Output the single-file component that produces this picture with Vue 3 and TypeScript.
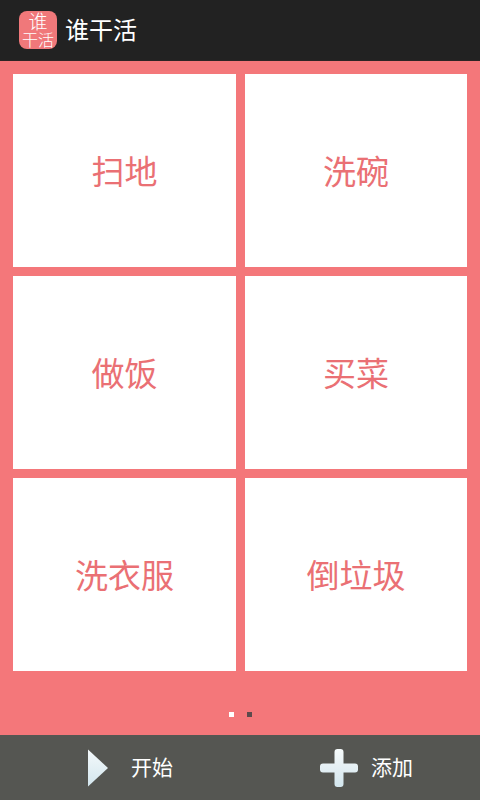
<script setup lang="ts">
const chores: string[] = ['扫地', '洗碗', '做饭', '买菜', '洗衣服', '倒垃圾']
</script>

<template>
  <div class="page">
    <header class="bar">
      <div class="logo"><span class="l1">谁</span><span class="l2">干活</span></div>
      <h1 class="title">谁干活</h1>
    </header>
    <main class="main">
      <div class="grid">
        <div v-for="c in chores" :key="c" class="card">{{ c }}</div>
      </div>
      <div class="dots">
        <i class="dot on"></i>
        <i class="dot"></i>
      </div>
    </main>
    <footer class="foot">
      <div class="action start">
        <svg width="22" height="38" viewBox="0 0 22 38">
          <defs>
            <linearGradient id="g1" x1="0" y1="0" x2="0" y2="1">
              <stop offset="0" stop-color="#f4f9fb" />
              <stop offset="1" stop-color="#d3e6ee" />
            </linearGradient>
          </defs>
          <path d="M1 .5 L21 19 L1 37.5 Z" fill="url(#g1)" />
        </svg>
        <span class="label">开始</span>
      </div>
      <div class="action add">
        <svg width="38" height="38" viewBox="0 0 38 38">
          <defs>
            <linearGradient id="g2" x1="0" y1="0" x2="0" y2="1">
              <stop offset="0" stop-color="#f6fafb" />
              <stop offset="1" stop-color="#d3e6ee" />
            </linearGradient>
          </defs>
          <path d="M14.5 3 Q14.5 0 17.5 0 H20.5 Q23.5 0 23.5 3 V14.500 H35 Q38 14.500 38 17.500 V20.500 Q38 23.500 35 23.500 H23.500 V35 Q23.500 38 20.500 38 H17.500 Q14.500 38 14.500 35 V23.500 H3 Q0 23.500 0 20.500 V17.500 Q0 14.500 3 14.500 H14.500 Z" fill="url(#g2)" />
        </svg>
        <span class="label">添加</span>
      </div>
    </footer>
  </div>
</template>

<style>
html, body { margin: 0; padding: 0; }
</style>

<style scoped>
.page {
  width: 480px;
  height: 800px;
  display: flex;
  flex-direction: column;
  overflow: hidden;
  font-family: "Noto Sans CJK SC", "Noto Sans", sans-serif;
  background: #f4777a;
}
.bar {
  height: 61px;
  flex: none;
  box-sizing: border-box;
  background: #222222;
  display: flex;
  align-items: center;
  padding-left: 19px;
  gap: 8px;
  border-bottom: 1px solid #2c2424;
}
.logo {
  width: 38px;
  height: 38px;
  border-radius: 8px;
  background: #f0787a;
  color: #fff;
  display: flex;
  flex-direction: column;
  align-items: center;
  justify-content: center;
  font-weight: 300;
}
.l1 { font-size: 19px; line-height: 18px; }
.l2 { font-size: 16px; line-height: 18px; }
.title {
  margin: -3px 0 0;
  color: #fff;
  font-size: 24px;
  line-height: 30px;
  font-weight: 400;
}
.main {
  flex: 1;
  min-height: 0;
  display: flex;
  flex-direction: column;
  padding: 13px 13px 0;
}
.grid {
  display: grid;
  grid-template-columns: 223px 222px;
  grid-auto-rows: 193px;
  gap: 9px;
}
.card {
  background: #fff;
  color: #ea7074;
  font-size: 33px;
  display: flex;
  align-items: center;
  justify-content: center;
  padding-bottom: 2px;
  box-sizing: border-box;
}
.dots {
  display: flex;
  justify-content: center;
  gap: 13px;
  margin-top: 41px;
}
.dot {
  width: 5px;
  height: 5px;
  background: #5c4a4c;
}
.dot.on { background: #fff; }
.foot {
  height: 65px;
  flex: none;
  background: #555652;
  display: flex;
  align-items: center;
  color: #fff;
  font-size: 21px;
}
.action {
  display: flex;
  align-items: center;
}
.label { margin-bottom: 4px; }
.start { margin-left: 87px; gap: 22px; }
.add { margin-left: 147px; gap: 13px; }
</style>
